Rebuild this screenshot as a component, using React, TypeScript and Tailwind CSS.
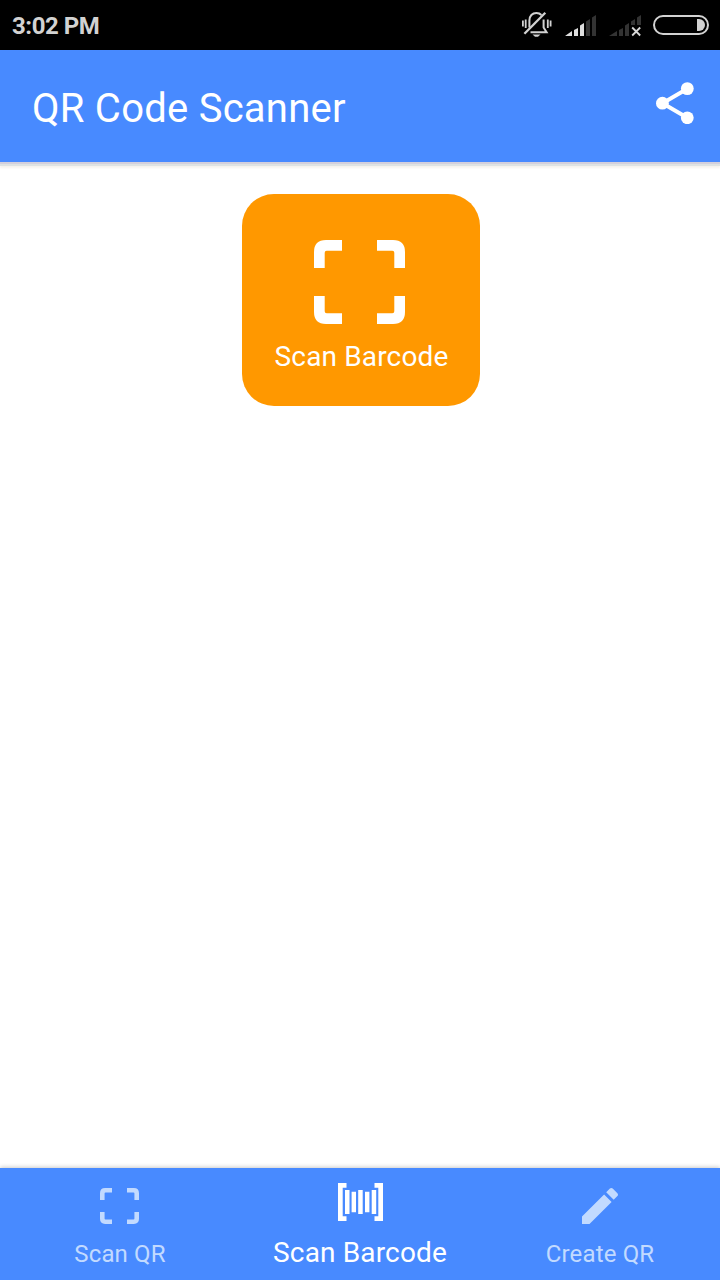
import type { ReactNode } from "react";

type IconProps = { className?: string };

function BellOffIcon() {
  return (
    <svg width="30" height="28" viewBox="0 0 30 28" fill="none" stroke="#d2d2d2" strokeWidth="2">
      <path d="M.9 10.5v6M3.7 9.5v8.5M25.8 9.5v8.5M28.6 10.5v6" strokeWidth="1.8" />
      <path d="M7.4 17.5v-7c0-4.6 2.9-7.5 7-7.5 2.2 0 3.8.7 5 2M21.6 9.5v8l3 4.8H8.5" />
      <path d="M2.4 23.8 23.3 2.7" strokeWidth="2.3" />
      <path d="M10.5 24.6h8l-2.5 2.2h-3z" fill="#d2d2d2" stroke="none" />
    </svg>
  );
}

function SignalIcon() {
  return (
    <svg width="32" height="22" viewBox="0 0 32 22" fill="#dedede">
      <path d="M0 21 7 16v5zM9 15l4-2v8H9zM15 10.5l4-2.5v13h-4z" />
      <path d="M21 6.5 25 4v17h-4zM27 2.5 31 0v21h-4z" fill="#333" />
    </svg>
  );
}

function NoSignalIcon() {
  return (
    <svg width="33" height="22" viewBox="0 0 33 22" fill="#333">
      <path d="M0 21 8 16v5zM10 15l4-2v8h-4zM16 10.5 20 8v13h-4zM22 6.5 26 4v6h-4zM28 2.5 32 0v10h-4z" />
      <path d="m23.2 12.5 8 8m0-8-8 8" stroke="#d8d8d8" strokeWidth="1.8" />
    </svg>
  );
}

function BatteryIcon() {
  return (
    <svg width="56" height="20" viewBox="0 0 56 20">
      <rect x="1" y="1" width="54" height="18" rx="9" fill="none" stroke="#d2d2d2" strokeWidth="2" />
      <path d="M44 4h2a6 6 0 0 1 0 12h-2z" fill="#d2d2d2" />
    </svg>
  );
}

function ShareIcon() {
  return (
    <svg width="38" height="42" viewBox="0 0 38 42" fill="#fff">
      <path d="M31.3 6.7 6.5 21.2l24.8 14.5" fill="none" stroke="#fff" strokeWidth="4" />
      <circle cx="6.4" cy="21.2" r="6.4" />
      <circle cx="31.3" cy="6.6" r="6.4" />
      <circle cx="31.3" cy="35.8" r="6.4" />
    </svg>
  );
}

function ScanIcon({ className }: IconProps) {
  return (
    <svg className={className} viewBox="0 0 91 84" preserveAspectRatio="none" fill="currentColor">
      <path d="M0 28V12Q0 0 12 0h16v10.7H12.7q-2 0-2 2V28z" />
      <path d="M63 0h16q12 0 12 12v16H80.3V12.7q0-2-2-2H63z" />
      <path d="M91 56v16q0 12-12 12H63V73.3h15.3q2 0 2-2V56z" />
      <path d="M28 84H12Q0 84 0 72V56h10.7v15.3q0 2 2 2H28z" />
    </svg>
  );
}

function BarcodeIcon({ className }: IconProps) {
  return (
    <svg className={className} viewBox="0 0 45 38" fill="currentColor">
      <path d="M0 0h8.5v4.7H4.7v28.6h3.8V38H0zM45 0h-8.5v4.7h3.8v28.6h-3.8V38H45z" />
      <path d="M7 7h4.5v24H7zM13.6 8.7H18v20.6h-4.4zM20.2 7h4.5v24h-4.5zM27 8.7h4.4v20.6H27zM33.7 7h4.5v24h-4.5z" />
    </svg>
  );
}

function PencilIcon({ className }: IconProps) {
  return (
    <svg className={className} viewBox="64 64 384 384" fill="currentColor">
      <path d="M64 368v80h80l235.727-235.729-79.999-79.998L64 368zm377.602-217.602c8.531-8.531 8.531-21.334 0-29.865l-50.135-50.135c-8.531-8.531-21.334-8.531-29.865 0l-39.468 39.469 79.999 79.998 39.469-39.467z" />
    </svg>
  );
}

function Tab({ icon, label, active }: { icon: ReactNode; label: string; active?: boolean }) {
  return (
    <button
      className={
        active
          ? "flex flex-1 flex-col items-center pt-[15px] text-white"
          : "flex flex-1 flex-col items-center pt-5 text-[#c2daff]"
      }
    >
      {icon}
      <span
        className={
          active
            ? "mt-4 text-[28px] leading-8 tracking-[0.15px]"
            : "mt-4 text-2xl leading-7 tracking-[0.15px]"
        }
      >
        {label}
      </span>
    </button>
  );
}

export default function App() {
  return (
    <div className="flex h-[1280px] w-[720px] flex-col overflow-hidden bg-white font-['Roboto',sans-serif]">
      {/* Status bar */}
      <div className="flex h-[50px] shrink-0 items-start justify-between bg-black pr-[11px] pl-3">
        <span className="pt-3 text-2xl leading-7 font-bold tracking-[-0.45px] text-[#d2d2d2]">3:02 PM</span>
        <div className="flex items-start pt-[10px]">
          <BellOffIcon />
          <div className="mt-[5px] ml-[13px]">
            <SignalIcon />
          </div>
          <div className="mt-[5px] ml-3">
            <NoSignalIcon />
          </div>
          <div className="mt-[5px] ml-[11px]">
            <BatteryIcon />
          </div>
        </div>
      </div>

      {/* Toolbar */}
      <header className="z-10 flex h-28 shrink-0 items-start justify-between bg-[#488aff] pr-[26px] pl-8 shadow-[0_2px_0_#d3d0dc,0_4px_0_#dfe3e3,0_6px_2px_#f6f3ee]">
        <h1 className="pt-[34px] text-[40px] leading-[50px] tracking-[0.25px] text-white">QR Code Scanner</h1>
        <button className="pt-8">
          <ShareIcon />
        </button>
      </header>

      <main className="flex flex-1 flex-col items-center pt-8">
        <button className="ml-[2px] flex h-[212px] w-[238px] flex-col items-center rounded-[32px] bg-[#ff9800] pt-[46px] text-white">
          <ScanIcon className="mr-[3px] h-[84px] w-[91px]" />
          <span className="mt-[17px] ml-px text-[28px] leading-8 tracking-[0.15px]">Scan Barcode</span>
        </button>
      </main>

      {/* Bottom tabs */}
      <nav className="flex h-28 shrink-0 items-start bg-[#488aff] shadow-[0_-1px_4px_#ccc]">
        <Tab icon={<ScanIcon className="mr-px h-9 w-[39px]" />} label="Scan QR" />
        <Tab icon={<BarcodeIcon className="h-[38px] w-[45px]" />} label="Scan Barcode" active />
        <Tab icon={<PencilIcon className="h-9 w-9" />} label="Create QR" />
      </nav>
    </div>
  );
}
